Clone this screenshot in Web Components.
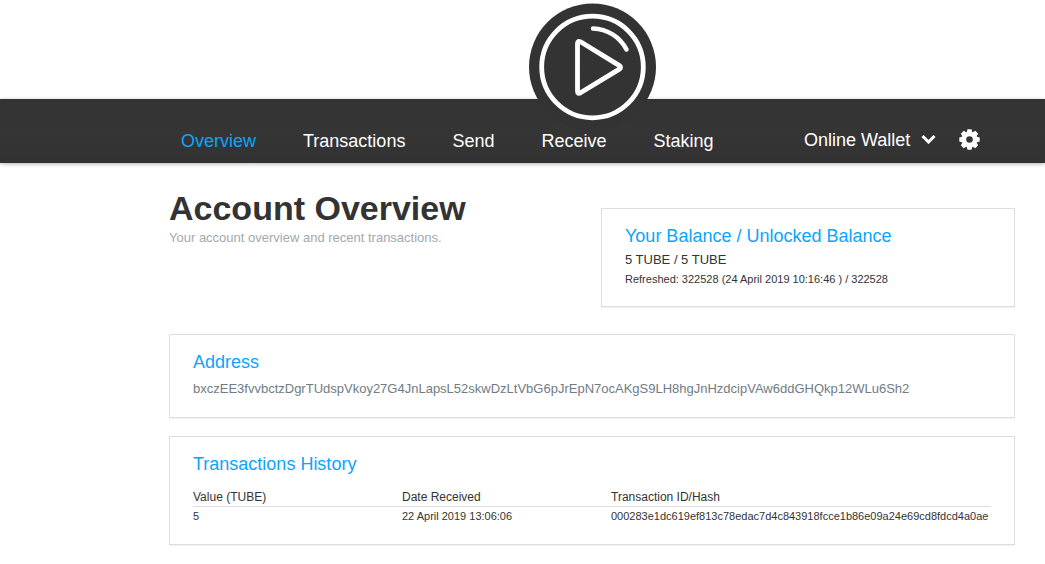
<!DOCTYPE html>
<html lang="en">
<head>
<meta charset="utf-8">
<title>Account Overview</title>
<style>
  :root {
    --ink: #333;
    --accent: #0aa5ff;
    --line: #dedede;
    --page-start: 169px;
    --page-end: 30px;
  }
  body {
    margin: 0;
    background: #fff;
    color: var(--ink);
    font-family: "Liberation Sans", Arial, sans-serif;
  }
</style>
</head>
<body>
<wallet-header>
  <wallet-logo slot="logo"></wallet-logo>
  <nav-link href="#overview" active>Overview</nav-link>
  <nav-link href="#transactions">Transactions</nav-link>
  <nav-link href="#send">Send</nav-link>
  <nav-link href="#receive">Receive</nav-link>
  <nav-link href="#staking">Staking</nav-link>
  <wallet-menu slot="tools"></wallet-menu>
</wallet-header>
<wallet-page>
  <page-title slot="title">Account Overview
    <span slot="subtitle">Your account overview and recent transactions.</span>
  </page-title>
  <wallet-card slot="balance" heading="Your Balance / Unlocked Balance">
    <balance-info amount="5 TUBE / 5 TUBE">Refreshed: 322528 (24 April 2019 10:16:46 ) / 322528</balance-info>
  </wallet-card>
  <wallet-card heading="Address">
    <wallet-address>bxczEE3fvvbctzDgrTUdspVkoy27G4JnLapsL52skwDzLtVbG6pJrEpN7ocAKgS9LH8hgJnHzdcipVAw6ddGHQkp12WLu6Sh2</wallet-address>
  </wallet-card>
  <wallet-card heading="Transactions History">
    <transaction-table></transaction-table>
  </wallet-card>
</wallet-page>

<script>
  const define = (name, html, setup) => {
    const template = document.createElement('template');
    template.innerHTML = html;
    customElements.define(name, class extends HTMLElement {
      constructor() {
        super();
        this.attachShadow({ mode: 'open' }).append(template.content.cloneNode(true));
      }
      connectedCallback() {
        if (setup) setup(this, this.shadowRoot);
      }
    });
  };

  define('wallet-header', `
    <style>
      :host { display: block; padding-top: 99px; }
      .bar {
        position: relative;
        display: flex;
        align-items: center;
        justify-content: space-between;
        height: 64px;
        box-sizing: border-box;
        padding: 20px 65px 0 181px;
        background: linear-gradient(#333 0, #353535 50%, #323232 100%);
        box-shadow: 0 1px 4px rgba(0, 0, 0, .3);
      }
      nav { display: flex; gap: 47px; position: relative; }
      /* The round logo hangs over the top edge of the bar. */
      .logo {
        position: absolute;
        top: -96px;
        left: var(--page-start);
        right: var(--page-end);
        display: flex;
        justify-content: center;
        pointer-events: none;
      }
    </style>
    <header class="bar">
      <div class="logo"><slot name="logo"></slot></div>
      <nav aria-label="Main"><slot></slot></nav>
      <slot name="tools"></slot>
    </header>`);

  define('wallet-logo', `
    <style>
      :host { display: block; }
      svg { display: block; }
    </style>
    <svg width="128" height="128" viewBox="0 0 128 128" fill="none" stroke="#fff" role="img" aria-label="Tube wallet">
      <circle cx="64.500" cy="64" r="63.500" fill="#333" stroke="none"/>
      <circle cx="64.500" cy="64" r="50.800" stroke-width="4.800"/>
      <path d="M49.500 40.600V88q0 3.400 3 1.800L91 66.400q3.200-2 0-4L52.500 38.800q-3-1.600-3 1.800Z" stroke-width="4.800" stroke-linejoin="round"/>
      <path d="M65 25.500A39 39 0 0 1 98.500 46.500" stroke-width="4.500" stroke-linecap="round"/>
    </svg>`);

  define('nav-link', `
    <style>
      :host { display: block; }
      a { display: block; color: #fff; font-size: 18px; line-height: 24px; text-decoration: none; }
      :host([active]) a { color: var(--accent); }
    </style>
    <a><slot></slot></a>`,
    (host, root) => root.querySelector('a').setAttribute('href', host.getAttribute('href')));

  define('wallet-menu', `
    <style>
      :host { display: flex; align-items: center; gap: 23px; padding-bottom: 4px; }
      .picker { display: grid; align-items: center; }
      .picker > * { grid-area: 1 / 1; }
      select {
        appearance: none;
        border: 0;
        margin: 0;
        padding: 2px 25px 0 0;
        background: none;
        color: #fff;
        font: 18px/24px "Liberation Sans", Arial, sans-serif;
      }
      option { color: #333; }
      .chevron { justify-self: end; pointer-events: none; }
      button { display: block; border: 0; padding: 0; background: none; color: #fff; }
      svg { display: block; }
    </style>
    <div class="picker">
      <select aria-label="Wallet"><option>Online Wallet</option></select>
      <svg class="chevron" width="15" height="10" viewBox="0 0 15 10" fill="none" stroke="#fff" stroke-width="3"><path d="M1.500 2L7.500 8L13.500 2"/></svg>
    </div>
    <button type="button" aria-label="Settings">
      <svg width="21" height="21" viewBox="-10.500 -10.500 21 21" fill="currentColor">
        <defs><path id="tooth" d="M-3-6.500L-2-10.200H2L3-6.500Z"/></defs>
        <path fill-rule="evenodd" d="M0-7.800A7.800 7.800 0 1 1 0 7.800A7.800 7.800 0 1 1 0-7.800ZM0-3.300A3.300 3.300 0 1 0 0 3.300A3.300 3.300 0 1 0 0-3.300Z"/>
        <use href="#tooth"/><use href="#tooth" transform="rotate(45)"/><use href="#tooth" transform="rotate(90)"/><use href="#tooth" transform="rotate(135)"/>
        <use href="#tooth" transform="rotate(180)"/><use href="#tooth" transform="rotate(225)"/><use href="#tooth" transform="rotate(270)"/><use href="#tooth" transform="rotate(315)"/>
      </svg>
    </button>`);

  define('wallet-page', `
    <style>
      :host { display: block; padding: 25px var(--page-end) 18px var(--page-start); }
      .intro { display: grid; grid-template-columns: 1fr 1fr; gap: 18px; margin-bottom: 27px; }
      .balance { padding-top: 20px; }
      .cards { display: grid; gap: 18px; }
    </style>
    <main>
      <div class="intro">
        <slot name="title"></slot>
        <div class="balance"><slot name="balance"></slot></div>
      </div>
      <div class="cards"><slot></slot></div>
    </main>`);

  define('page-title', `
    <style>
      :host { display: block; }
      h1 { margin: 0; font-size: 34px; line-height: 40px; font-weight: bold; white-space: nowrap; }
      p { margin: 0; color: #a2a9ae; font-size: 13px; line-height: 20px; }
    </style>
    <h1><slot></slot></h1>
    <p><slot name="subtitle"></slot></p>`);

  define('wallet-card', `
    <style>
      :host {
        display: block;
        padding: 16px 23px 18px;
        border: 1px solid var(--line);
        background: #fff;
        box-shadow: 0 1px 1px rgba(0, 0, 0, .05);
      }
      h2 { margin: 0; color: var(--accent); font-size: 18px; line-height: 22px; font-weight: normal; }
    </style>
    <h2></h2>
    <slot></slot>`,
    (host, root) => { root.querySelector('h2').textContent = host.getAttribute('heading'); });

  define('balance-info', `
    <style>
      :host { display: block; padding-top: 3px; }
      p { margin: 0; font-size: 11px; line-height: 18px; }
      .amount { font-size: 13px; line-height: 20px; }
    </style>
    <p class="amount"></p>
    <p><slot></slot></p>`,
    (host, root) => { root.querySelector('.amount').textContent = host.getAttribute('amount'); });

  define('wallet-address', `
    <style>
      :host { display: block; padding-top: 6px; color: #6f7c85; font-size: 13px; line-height: 20px; overflow-wrap: anywhere; }
    </style>
    <slot></slot>`);

  define('transaction-table', `
    <style>
      :host { display: block; padding: 13px 0 1px; }
      table { width: 100%; border-collapse: collapse; table-layout: fixed; }
      th, td { padding: 0; text-align: left; font-weight: normal; white-space: nowrap; }
      th { width: 209px; font-size: 12px; line-height: 18px; border-bottom: 1px solid var(--line); }
      th:last-child { width: auto; }
      td { font-size: 11px; line-height: 18px; }
    </style>
    <table>
      <thead><tr><th scope="col">Value (TUBE)</th><th scope="col">Date Received</th><th scope="col">Transaction ID/Hash</th></tr></thead>
      <tbody><tr><td>5</td><td>22 April 2019 13:06:06</td><td>000283e1dc619ef813c78edac7d4c843918fcce1b86e09a24e69cd8fdcd4a0ae</td></tr></tbody>
    </table>`);
</script>
</body>
</html>
